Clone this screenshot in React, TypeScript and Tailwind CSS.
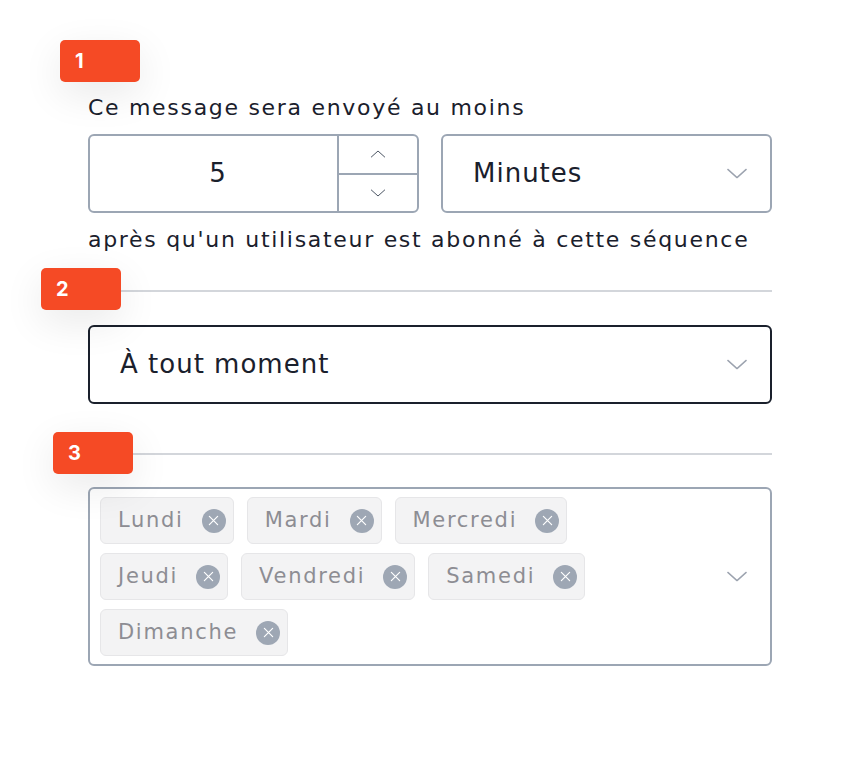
import React from 'react';

const font = { fontFamily: '"DejaVu Sans", "Open Sans", sans-serif' };

const Chevron = ({ className = '' }: { className?: string }) => (
  <svg viewBox="0 0 24 12" className={className} fill="none" stroke="currentColor" strokeWidth={1.5} strokeLinecap="round" strokeLinejoin="round">
    <path d="M2 1.5l10 9 10-9" />
  </svg>
);

const Badge = ({ n, className }: { n: number; className: string }) => (
  <div
    className={`absolute w-[80px] h-[42px] rounded-[5px] bg-[#f54a25] text-white font-bold text-[20px] pl-[15px] flex items-center shadow-[0_12px_40px_rgba(0,0,0,0.09)] ${className}`}
    style={{ fontFamily: 'Inter, sans-serif' }}
  >
    {n}
  </div>
);

const Tag = ({ label }: { label: string }) => (
  <div className="h-[47px] flex items-center gap-[18px] pl-[17px] pr-[7px] rounded-md bg-[#f3f3f4] border border-[#e6e6e8] text-[21px] tracking-[1.7px] text-[#8d8d93]">
    <span>{label}</span>
    <span className="w-[24px] h-[24px] rounded-full bg-[#9ea7b4] flex items-center justify-center">
      <svg viewBox="0 0 12 12" className="w-[11px] h-[11px]" stroke="white" strokeWidth={1.3} strokeLinecap="round">
        <path d="M1.5 1.5l9 9M10.5 1.5l-9 9" />
      </svg>
    </span>
  </div>
);

const days = ['Lundi', 'Mardi', 'Mercredi', 'Jeudi', 'Vendredi', 'Samedi', 'Dimanche'];

export default function App() {
  return (
    <div className="min-h-screen w-full bg-white text-[#1a202c]" style={font}>
      <div className="pt-[40px] pl-[88px] w-[772px]">
        {/* step 1 */}
        <section className="relative pt-[53px]">
          <Badge n={1} className="top-0 left-[-28px]" />
          <p className="text-[22px] tracking-[1.7px] leading-[30px]">Ce message sera envoyé au moins</p>
          <div className="grid grid-cols-2 gap-[22px] mt-[11px]">
            <div className="h-[79px] flex rounded-md border-2 border-[#9ca6b4] overflow-hidden">
              <div className="flex-1 flex items-center justify-center pl-[8px] text-[26px]">5</div>
              <div className="w-[80px] flex flex-col border-l-2 border-[#9ca6b4]">
                <button className="flex-1 flex items-center justify-center text-[#4b5563]">
                  <Chevron className="w-[16px] h-[8px] rotate-180" />
                </button>
                <button className="flex-1 flex items-center justify-center border-t-2 border-[#9ca6b4] text-[#4b5563]">
                  <Chevron className="w-[16px] h-[8px]" />
                </button>
              </div>
            </div>
            <div className="h-[79px] flex items-center justify-between rounded-md border-2 border-[#9ca6b4] pl-[30px] pr-[22px]">
              <span className="text-[26px] tracking-[1px]">Minutes</span>
              <Chevron className="w-[22px] h-[11px] text-[#9ca3af]" />
            </div>
          </div>
          <p className="text-[22px] tracking-[1.7px] leading-[30px] mt-[12px]">après qu'un utilisateur est abonné à cette séquence</p>
        </section>

        {/* step 2 */}
        <div className="relative mt-[35px] h-[2px] bg-[#d3d6db]">
          <Badge n={2} className="top-[-22px] left-[-47px]" />
        </div>
        <div className="mt-[33px] h-[79px] flex items-center justify-between rounded-md border-2 border-[#1a202c] pl-[30px] pr-[22px]">
          <span className="text-[26px] tracking-[1px]">À tout moment</span>
          <Chevron className="w-[22px] h-[11px] text-[#9ca3af]" />
        </div>

        {/* step 3 */}
        <div className="relative mt-[49px] h-[2px] bg-[#d3d6db]">
          <Badge n={3} className="top-[-21px] left-[-35px]" />
        </div>
        <div className="mt-[32px] flex items-center rounded-md border-2 border-[#9ca6b4] pl-[10px] pr-[22px] py-[8px] min-h-[179px]">
          <div className="flex-1 flex flex-wrap gap-x-[13px] gap-y-[9px] pr-[80px]">
            {days.map((d) => (
              <Tag key={d} label={d} />
            ))}
          </div>
          <Chevron className="w-[22px] h-[11px] text-[#9ca3af]" />
        </div>
      </div>
    </div>
  );
}
